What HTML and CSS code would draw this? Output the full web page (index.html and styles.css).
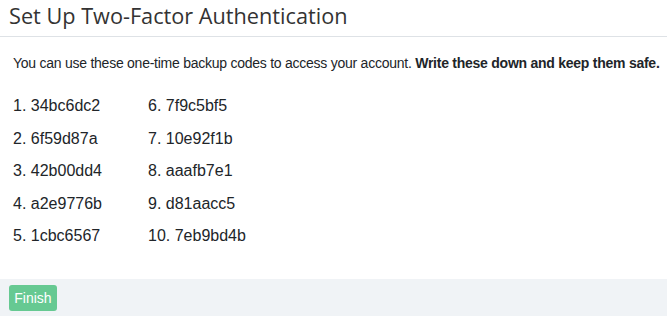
FILE: index.html
```html
<!DOCTYPE html>
<html lang="en">

<head>
    <meta charset="UTF-8">
    <meta name="viewport" content="width=device-width, initial-scale=1.0">
    <title>Set Up Two-Factor Authentication</title>
    <link rel="stylesheet" href="styles.css">
</head>

<body>
    <div class="modal">
        <div class="modal-header">
            <h2>Set Up Two-Factor Authentication</h2>
        </div>

        <div class="modal-body">
            <p class="intro">
                You can use these one-time backup codes to access your account.
                <strong>Write these down and keep them safe.</strong>
            </p>

            <div class="codes">
                <ol class="code-list">
                    <li>1. 34bc6dc2</li>
                    <li>2. 6f59d87a</li>
                    <li>3. 42b00dd4</li>
                    <li>4. a2e9776b</li>
                    <li>5. 1cbc6567</li>
                </ol>
                <ol class="code-list">
                    <li>6. 7f9c5bf5</li>
                    <li>7. 10e92f1b</li>
                    <li>8. aaafb7e1</li>
                    <li>9. d81aacc5</li>
                    <li>10. 7eb9bd4b</li>
                </ol>
            </div>
        </div>

        <div class="modal-footer">
            <button class="btn btn-success">Finish</button>
        </div>
    </div>
</body>

</html>
```

FILE: styles.css
```css
* {
    margin: 0;
    padding: 0;
    box-sizing: border-box;
}

body {
    font-family: "Liberation Sans", Arial, sans-serif;
    color: #212529;
    background: white;
}

.modal {
    width: 667px;
    height: 316px;
    display: flex;
    flex-direction: column;
    overflow: hidden;
}

.modal-header {
    height: 37px;
    padding: 2px 9px 0;
    border-bottom: 1px solid #dee2e6;
}

.modal-header h2 {
    font-family: "Open Sans", sans-serif;
    font-size: 21.7px;
    font-weight: 400;
    color: #333;
    line-height: 28px;
}

.modal-body {
    flex: 1;
    padding: 16px 13px 0;
}

.intro {
    font-size: 14px;
    line-height: 20px;
    letter-spacing: -0.25px;
    white-space: nowrap;
    margin-bottom: 23px;
}

.intro strong {
    font-weight: 700;
}

.codes {
    display: flex;
}

.code-list {
    list-style: none;
    width: 135px;
    font-size: 16px;
}

.code-list li {
    line-height: 20px;
    margin-bottom: 12.5px;
}

.modal-footer {
    height: 37px;
    background: #f0f3f6;
    padding: 6px 9px;
}

.btn {
    font-family: "Liberation Sans", Arial, sans-serif;
    border: none;
    border-radius: 3px;
    cursor: pointer;
}

.btn-success {
    background: #66c992;
    color: white;
    width: 48px;
    height: 26px;
    font-size: 14px;
}
```
